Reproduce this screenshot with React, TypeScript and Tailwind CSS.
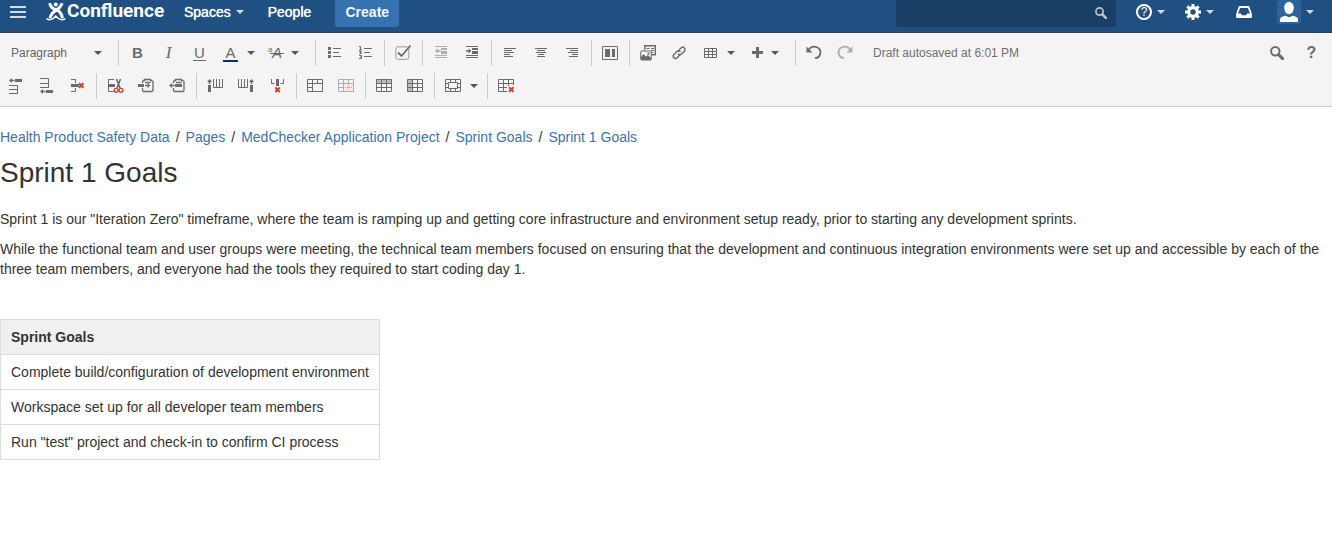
import type { ReactNode } from "react";

const ink = "#6b6b6b";
const red = "#d04437";

function Icon({ children, faded }: { children: ReactNode; faded?: boolean }) {
  return (
    <svg
      viewBox="0 0 17 16"
      width="17"
      height="16"
      fill="none"
      stroke={ink}
      className={faded ? "shrink-0 overflow-visible opacity-50" : "shrink-0 overflow-visible"}
      aria-hidden="true"
    >
      {children}
    </svg>
  );
}

function Caret({ color = "#555" }: { color?: string }) {
  return (
    <svg viewBox="0 0 8 4" width="8" height="4" className="shrink-0" aria-hidden="true">
      <path d="M0 0h8L4 4z" fill={color} />
    </svg>
  );
}

function Tool({ label, children }: { label: string; children: ReactNode }) {
  return (
    <button type="button" aria-label={label} className="flex h-[26px] w-[31px] shrink-0 items-center justify-center">
      {children}
    </button>
  );
}

function MenuTool({ label, children, wide }: { label: string; children: ReactNode; wide?: boolean }) {
  return (
    <button
      type="button"
      aria-label={label}
      aria-haspopup="menu"
      className={
        wide
          ? "flex h-[26px] w-[51px] shrink-0 items-center gap-[6px] pl-[7px]"
          : "flex h-[26px] w-[46px] shrink-0 items-center gap-2 pl-[7px]"
      }
    >
      {children}
      <Caret />
    </button>
  );
}

function Group({ children, last }: { children: ReactNode; last?: boolean }) {
  return (
    <div className={last ? "flex shrink-0 items-center" : "mr-[3px] flex shrink-0 items-center border-r border-[#ccc] pr-[3px]"}>
      {children}
    </div>
  );
}

const Grid = () => <path d="M.5 1.5h15v12H.5zM.5 5.5h15M.5 9.5h15M5.5 1.5v12M10.5 1.5v12" />;

const RedCross = ({ x, y }: { x: number; y: number }) => (
  <path d={`M${x} ${y}l4.5 4.5m0-4.5l-4.500 4.500`} stroke={red} strokeWidth="2" />
);

const Align = ({ rows }: { rows: [number, number][] }) => (
  <>
    {rows.map(([x, w], i) => (
      <path key={i} d={`M${x} ${3.5 + i * 2}h${w}`} strokeWidth="1" />
    ))}
  </>
);

const ArrowLeft = ({ x, y }: { x: number; y: number }) => (
  <path d={`M${x} ${y}l3-2.5v1.700h2.500v1.600h-2.500v1.700z`} fill={ink} stroke="none" />
);
const ArrowRight = ({ x, y }: { x: number; y: number }) => (
  <path d={`M${x} ${y}l-3-2.500v1.700h-2.500v1.600h2.500v1.700z`} fill={ink} stroke="none" />
);
const ArrowUp = ({ x, y }: { x: number; y: number }) => (
  <path d={`M${x} ${y}l2.500 3h-1.700v2h-1.600v-2h-1.700z`} fill={ink} stroke="none" />
);
const Block = ({ d }: { d: string }) => <path d={d} fill={ink} stroke="none" />;

function Magnifier({ color, size }: { color: string; size: number }) {
  return (
    <svg viewBox="0 0 14 14" width={size} height={size} fill="none" stroke={color} aria-hidden="true">
      <circle cx="5.3" cy="5.3" r="4.2" strokeWidth="2" />
      <path d="M8.6 8.6l4 4" strokeWidth="3" strokeLinecap="round" />
    </svg>
  );
}

function Header() {
  return (
    <header className="flex h-[33px] items-start border-b border-[#2e3d54] bg-[#205081] text-[14px] text-white">
      <button type="button" aria-label="Linked applications" className="flex h-6 items-center pl-[10px]">
        <svg viewBox="0 0 16 12" width="16" height="12" stroke="#d2dce6" strokeWidth="2" aria-hidden="true">
          <path d="M0 1h16M0 6h16M0 11h16" />
        </svg>
      </button>
      <a href="#home" className="ml-5 flex h-[22px] w-[118px] items-center gap-[1px]">
        <svg viewBox="0 0 20 20" width="20" height="20" fill="none" stroke="#fff" aria-hidden="true" className="shrink-0">
          <path d="M3.5 2.200C5 6.500 7 8.200 9.800 8.400c3.600 1.400 6 4.200 6.600 9" strokeWidth="3" />
          <path d="M16.200 2.200C14.700 6 13 7.500 11 8.800 7 11 4.600 13 4 17.400" strokeWidth="3" />
          <circle cx="9.8" cy="3.400" r="2" fill="#fff" stroke="none" />
          <path d="M.5 17.500c2 2.200 6 1.800 9.300-2.500 3.400 4.300 7.200 4.700 9.500 2.500" strokeWidth="1.300" />
        </svg>
        <span className="font-[Roboto,'Noto_Sans',sans-serif] text-[19px] leading-[22px] font-bold">Confluence</span>
      </a>
      <nav className="flex items-start">
        <button type="button" className="ml-5 flex h-6 items-center gap-[5px] [text-shadow:0_0_1px_#fff]">
          Spaces
          <Caret color="#d2dce6" />
        </button>
        <a href="#people" className="ml-6 flex h-6 items-center [text-shadow:0_0_1px_#fff]">
          People
        </a>
        <button type="button" className="ml-6 h-[27px] w-16 rounded-b-[3px] bg-[#3572b0] pb-[3px] font-bold text-[#f4f8fb]">
          Create
        </button>
      </nav>
      <form role="search" className="ml-auto flex h-[27px] w-[220px] items-center rounded-b-[3px] bg-[#1a3f65] pr-[9px]">
        <input type="search" aria-label="Search" className="h-full min-w-0 flex-1 bg-transparent px-2 text-[13px] outline-none" />
        <button type="button" aria-label="Run search" className="pb-[2px]">
          <Magnifier color="#b8c4d0" size={12} />
        </button>
      </form>
      <button type="button" aria-label="Help" className="ml-5 flex h-6 items-center gap-[5px]">
        <span className="flex size-4 items-center justify-center rounded-full border-2 border-white text-[12px] leading-3">?</span>
        <Caret color="#d2dce6" />
      </button>
      <button type="button" aria-label="Settings" className="ml-5 flex h-6 items-center gap-[5px]">
        <svg viewBox="0 0 16 16" width="16" height="16" fill="none" stroke="#fff" aria-hidden="true">
          <circle cx="8" cy="8" r="4.300" strokeWidth="3.200" />
          <path
            d="M8 0v3M8 13v3M0 8h3M13 8h3M2.340 2.340l2.200 2.200M11.460 11.460l2.200 2.200M2.340 13.660l2.200-2.200M11.460 4.540l2.200-2.200"
            strokeWidth="3"
          />
        </svg>
        <Caret color="#d2dce6" />
      </button>
      <button type="button" aria-label="Notifications" className="ml-[22px] flex h-6 items-center">
        <svg viewBox="0 0 16 12" width="16" height="12" fill="none" stroke="#fff" aria-hidden="true">
          <path d="M3.500 1h9L15 8v3H1V8z" strokeWidth="1.800" strokeLinejoin="round" />
          <path d="M1 7.500h3.800l1.200 1.700h4l1.200-1.700H15V11H1z" fill="#fff" stroke="none" />
        </svg>
      </button>
      <button type="button" aria-label="Your profile" className="mr-[18px] ml-[25px] flex h-6 items-center gap-[5px]">
        <svg viewBox="0 0 24 24" width="24" height="24" className="rounded-[3px] bg-[#2d639b]" fill="#fff" aria-hidden="true">
          <ellipse cx="12" cy="8" rx="4.800" ry="6.200" />
          <path d="M3 22v-2.500c0-2 2.500-3.200 5.300-3.700l3.700 1.500 3.700-1.500c2.800.5 5.300 1.700 5.300 3.700V22z" />
        </svg>
        <Caret color="#d2dce6" />
      </button>
    </header>
  );
}

function TopTools() {
  return (
    <div className="flex h-[26px] items-stretch">
      <Group>
        <div className="grid w-[115px] items-center">
          <select
            aria-label="Paragraph style"
            className="col-start-1 row-start-1 h-[26px] w-full appearance-none bg-transparent pl-[11px] text-[12px] text-[#666] outline-none"
          >
            <option>Paragraph</option>
            <option>Heading 1</option>
            <option>Heading 2</option>
          </select>
          <span className="pointer-events-none col-start-1 row-start-1 mr-[13px] justify-self-end">
            <Caret />
          </span>
        </div>
      </Group>
      <Group>
        <Tool label="Bold">
          <span className="text-[15px] leading-4 font-bold">B</span>
        </Tool>
        <Tool label="Italic">
          <span className="font-['Liberation_Serif',serif] text-[17px] leading-4 italic">I</span>
        </Tool>
        <Tool label="Underline">
          <span className="w-[13px] border-b border-[#6b6b6b] text-center text-[15px] leading-[14px]">U</span>
        </Tool>
        <MenuTool label="Text colour">
          <span className="mx-[1px] mt-[2px] w-[15px] border-b-2 border-[#003366] text-center text-[15px] leading-[14px]">A</span>
        </MenuTool>
        <MenuTool label="More formatting" wide>
          <Icon>
            <text x="0" y="7" fontSize="8" fill={ink} stroke="none">a</text>
            <text x="4" y="13" fontSize="15" fontStyle="italic" fill={ink} stroke="none">A</text>
            <path d="M2 8.500h14" />
          </Icon>
        </MenuTool>
      </Group>
      <Group>
        <Tool label="Bullet list">
          <Icon>
            <Block d="M2 2h3v3H2zM2 6h3v3H2zM2 10h3v3H2z" />
            <path d="M7 3.500h8M7 7.500h6M7 11.500h8" />
          </Icon>
        </Tool>
        <Tool label="Numbered list">
          <Icon>
            <path d="M2 1.500h1.500V5M2 5h3M2 6.500h2.500L2.500 8.500H5M2 10.500h2.500v3H2M3 12h2" />
            <path d="M7 3.500h8M7 7.500h6M7 11.500h8" />
          </Icon>
        </Tool>
      </Group>
      <Group>
        <Tool label="Task list">
          <Icon>
            <rect x=".8" y="1.800" width="13" height="12.500" rx="2" stroke="#999" />
            <path d="M3 7.500l3.500 3.500L15.500.5" strokeWidth="1.800" />
          </Icon>
        </Tool>
      </Group>
      <Group>
        <Tool label="Outdent">
          <Icon faded>
            <path d="M2 1.500h12M2 10.500h12M2 12.500h12" />
            <Block d="M8 3h6v2H8zM8 6h6v3H8z" />
            <ArrowLeft x={2} y={6} />
          </Icon>
        </Tool>
        <Tool label="Indent">
          <Icon>
            <path d="M2 1.500h12M2 10.500h12M2 12.500h12" />
            <Block d="M8 3h6v2H8zM8 6h6v3H8z" />
            <ArrowRight x={7.5} y={6} />
          </Icon>
        </Tool>
      </Group>
      <Group>
        <Tool label="Align left">
          <Icon>
            <Align rows={[[2, 12], [2, 8], [2, 10], [2, 6], [2, 9]]} />
          </Icon>
        </Tool>
        <Tool label="Align centre">
          <Icon>
            <Align rows={[[2, 12], [4, 8], [3, 10], [5, 6], [4, 8]]} />
          </Icon>
        </Tool>
        <Tool label="Align right">
          <Icon>
            <Align rows={[[2, 12], [6, 8], [4, 10], [8, 6], [5, 9]]} />
          </Icon>
        </Tool>
      </Group>
      <Group>
        <Tool label="Page layout">
          <Icon>
            <path d="M.5 1.500h15v13H.5z" />
            <Block d="M3 4h5v8H3zM10 4h3v8h-3z" />
          </Icon>
        </Tool>
      </Group>
      <Group>
        <Tool label="Files and images">
          <Icon>
            <path d="M4.800 5V.700h10.500v9H11.500" strokeWidth="1.400" />
            <path d="M6.500 3.500h3M11 3.500h3M11 5.500h3M11 7.500h2" />
            <rect x=".7" y="6" width="10.600" height="9" rx="1" />
            <Block d="M1 15v-3l2.500-3 2.500 2.500 2-1.500 3 3v2zM7.500 7.500h2v2h-2z" />
          </Icon>
        </Tool>
        <Tool label="Link">
          <Icon>
            <g strokeWidth="1.400" strokeLinecap="round">
              <path d="M7 6.200l3-3.300a2.300 2.300 0 0 1 3.300 3.300L10.500 9a2.300 2.300 0 0 1-3.200.1" />
              <path d="M9.200 9.600l-3 3.200a2.300 2.300 0 0 1-3.300-3.300l2.900-2.900A2.300 2.300 0 0 1 9 6.600" />
            </g>
          </Icon>
        </Tool>
        <MenuTool label="Insert table">
          <Icon>
            <path d="M2.500 3.500h12v9h-12zM2.500 6.500h12M2.500 9.500h12M6.500 3.500v9M10.500 3.500v9" />
          </Icon>
        </MenuTool>
        <MenuTool label="Insert more content" wide>
          <Icon>
            <path d="M9.500 2v11M4 7.500h11" strokeWidth="3" />
          </Icon>
        </MenuTool>
      </Group>
      <Group last>
        <Tool label="Undo">
          <Icon>
            <path d="M2.500 5.500C4 1.500 8 .8 11 2.300a5.700 5.700 0 0 1-2 10.900" strokeWidth="1.800" />
            <Block d="M.5 1.500v6h6z" />
          </Icon>
        </Tool>
        <Tool label="Redo">
          <Icon faded>
            <path d="M13.500 5.500C12 1.500 8 .8 5 2.300a5.700 5.700 0 0 0 2 10.900" strokeWidth="1.800" />
            <Block d="M15.500 1.500v6h-6z" />
          </Icon>
        </Tool>
      </Group>
      <p className="ml-3 self-center text-[12px] leading-4 text-[#707070]">Draft autosaved at 6:01 PM</p>
      <div className="mr-[5px] ml-auto flex items-center gap-1">
        <Tool label="Find and replace">
          <Magnifier color={ink} size={14} />
        </Tool>
        <Tool label="Editor help">
          <span className="text-[16px] leading-4 font-bold">?</span>
        </Tool>
      </div>
    </div>
  );
}

function TableTools() {
  const clip = "M4.500 5V3.500l1-1h1v-1h6v1h1l1.500 1v9l-1 1h-8.500l-1-1V10M7 4.500h5.500";
  return (
    <div className="flex h-[26px] items-stretch">
      <Group>
        <Tool label="Insert row before">
          <Icon>
            <ArrowLeft x={2} y={2.5} />
            <Block d="M8 1h7v3H8z" />
            <path d="M2 7.500h8.500v8M2 11.500h8M2 15.500h9" />
          </Icon>
        </Tool>
        <Tool label="Insert row after">
          <Icon>
            <path d="M2 .5h8.500v9M2 5.500h8M2 9.500h9" />
            <ArrowLeft x={2} y={13.5} />
            <Block d="M8 12h7v3H8z" />
          </Icon>
        </Tool>
        <Tool label="Delete row">
          <Icon>
            <path d="M2 1.500h4.500V5M6.500 10v3.500H2" />
            <Block d="M2 6h8v3H2z" />
            <RedCross x={10} y={5.25} />
          </Icon>
        </Tool>
      </Group>
      <Group>
        <Tool label="Cut row">
          <Icon>
            <path d="M7 1.500H1.500v12H7" />
            <Block d="M2 6h6v3H2z" />
            <path d="M9.500 1l3.500 9M13.500 1L10 10" strokeWidth="1.600" />
            <g stroke={red} strokeWidth="1.400">
              <circle cx="9.200" cy="12.300" r="1.900" />
              <circle cx="14" cy="12.300" r="1.900" />
            </g>
          </Icon>
        </Tool>
        <Tool label="Copy row">
          <Icon>
            <path d={clip} strokeWidth="1.300" />
            <Block d="M0 6h6v3H0z" />
            <ArrowRight x={12.500} y={7.500} />
          </Icon>
        </Tool>
        <Tool label="Paste row">
          <Icon>
            <path d={clip} strokeWidth="1.300" />
            <ArrowLeft x={0} y={7.500} />
            <Block d="M6 6h7v3H6z" />
          </Icon>
        </Tool>
      </Group>
      <Group>
        <Tool label="Insert column before">
          <Icon>
            <ArrowUp x={2.5} y={1} />
            <Block d="M1 7h3v7H1z" />
            <path d="M6.500 1v8.500h9V1M9.500 1v8M12.500 1v8" />
          </Icon>
        </Tool>
        <Tool label="Insert column after">
          <Icon>
            <path d="M.5 1v8.500h9V1M3.500 1v8M6.500 1v8" />
            <ArrowUp x={13.5} y={1} />
            <Block d="M12 7h3v7h-3z" />
          </Icon>
        </Tool>
        <Tool label="Delete column">
          <Icon>
            <path d="M2.500 1v4.500h3M14.500 1v4.500h-3" />
            <Block d="M7 1h3v7H7z" />
            <RedCross x={6.250} y={9.500} />
          </Icon>
        </Tool>
      </Group>
      <Group>
        <Tool label="Merge cells">
          <Icon>
            <path d="M.5 1.500h15v12H.5zM.5 5.500h15M5.500 1.500v12M10.500 1.500v4M.5 9.500h5" />
          </Icon>
        </Tool>
        <Tool label="Split cells">
          <Icon faded>
            <path d="M5.500 5.500h10v8h-10z" fill="#ffe0dc" />
            <path d="M.5 1.500h15v12H.5zM.5 5.500h15M5.500 1.500v12M10.500 1.500v4M.5 9.500h5" />
            <path d="M7 9.500h8M10.500 7v6" stroke="#ff3020" strokeDasharray="1 1" />
          </Icon>
        </Tool>
      </Group>
      <Group>
        <Tool label="Heading row">
          <Icon>
            <path d="M1 2h14v3H1z" fill="#bbb" stroke="none" />
            <Grid />
          </Icon>
        </Tool>
        <Tool label="Heading column">
          <Icon>
            <path d="M1 2h4v11H1z" fill="#bbb" stroke="none" />
            <Grid />
          </Icon>
        </Tool>
      </Group>
      <Group>
        <MenuTool label="Cell background">
          <Icon>
            <path d="M.5 1.500h15v12H.5zM3.500 4.500h9v6h-9z" />
            <path d="M5.500 2v2M10.500 2v2M5.500 11v2M10.500 11v2M1 5.500h2M1 9.500h2M13 5.500h2M13 9.500h2" />
          </Icon>
        </MenuTool>
      </Group>
      <Group last>
        <Tool label="Delete table">
          <Icon>
            <path d="M9 13.500H.5v-12h15V7M.5 5.500h15M.5 9.500H9M5.500 1.500v12M10.500 1.500V8" />
            <RedCross x={11} y={9.250} />
          </Icon>
        </Tool>
      </Group>
    </div>
  );
}

const crumbs = ["Health Product Safety Data", "Pages", "MedChecker Application Project", "Sprint Goals", "Sprint 1 Goals"];

const goals = [
  "Complete build/configuration of development environment",
  "Workspace set up for all developer team members",
  'Run "test" project and check-in to confirm CI process',
];

export default function App() {
  return (
    <div className="min-h-screen bg-white font-['Liberation_Sans',Arial,sans-serif] text-[14px] leading-5 text-[#333]">
      <Header />
      <div
        role="toolbar"
        aria-label="Editor"
        className="flex flex-col gap-[7px] border-b border-[#ccc] bg-[#f4f4f4] py-[7px] text-[#6b6b6b]"
      >
        <TopTools />
        <TableTools />
      </div>
      <main className="pt-5">
        <nav aria-label="Breadcrumb">
          <ol className="flex flex-wrap">
            {crumbs.map((crumb, i) => (
              <li key={crumb} className="flex">
                {i > 0 && <span className="px-[6px]">/</span>}
                <a href="#page" className="text-[#3b73af]">
                  {crumb}
                </a>
              </li>
            ))}
          </ol>
        </nav>
        <h1 className="mt-2 text-[28px] leading-9">Sprint 1 Goals</h1>
        <p className="mt-[18px]">
          Sprint 1 is our "Iteration Zero" timeframe, where the team is ramping up and getting core infrastructure and
          environment setup ready, prior to starting any development sprints.
        </p>
        <p className="mt-[10px]">
          While the functional team and user groups were meeting, the technical team members focused on ensuring that the
          development and continuous integration environments were set up and accessible by each of the three team
          members, and everyone had the tools they required to start coding day 1.
        </p>
        <table className="mt-10 border-collapse border border-[#ddd] text-left">
          <thead>
            <tr>
              <th scope="col" className="border border-[#ddd] bg-[#f0f0f0] px-[10px] py-[7px] font-bold">
                Sprint Goals
              </th>
            </tr>
          </thead>
          <tbody>
            {goals.map((goal) => (
              <tr key={goal}>
                <td className="border border-[#ddd] px-[10px] py-[7px]">{goal}</td>
              </tr>
            ))}
          </tbody>
        </table>
      </main>
    </div>
  );
}
